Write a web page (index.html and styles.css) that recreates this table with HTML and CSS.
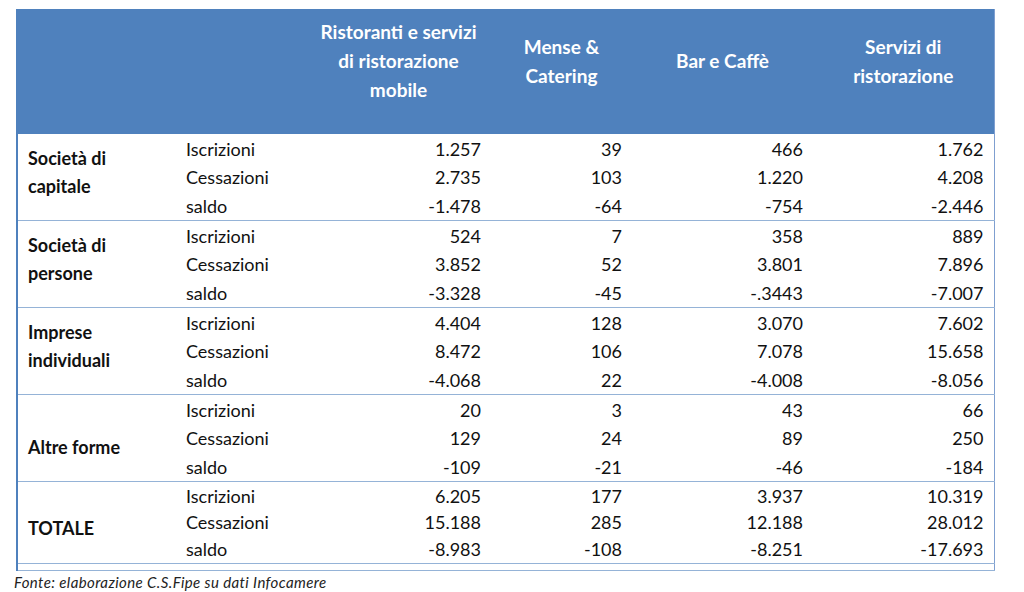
FILE: index.html
```html
<!DOCTYPE html>
<html lang="it">
<head>
<meta charset="utf-8">
<title>Iscrizioni e cessazioni</title>
<link rel="stylesheet" href="styles.css">
</head>
<body>
<div class="wrap">
<table class="data">
  <colgroup>
    <col class="c1"><col class="c2"><col class="c3"><col class="c4"><col class="c5"><col class="c6">
  </colgroup>
  <thead>
    <tr>
      <th></th>
      <th></th>
      <th>Ristoranti e servizi<br>di ristorazione<br>mobile</th>
      <th>Mense &amp;<br>Catering</th>
      <th>Bar e Caffè</th>
      <th>Servizi di<br>ristorazione</th>
    </tr>
  </thead>
  <tbody class="grp">
    <tr class="r1"><td class="lab two" rowspan="3">Società di<br>capitale</td><td>Iscrizioni</td><td class="n">1.257</td><td class="n">39</td><td class="n">466</td><td class="n">1.762</td></tr>
    <tr class="r2"><td>Cessazioni</td><td class="n">2.735</td><td class="n">103</td><td class="n">1.220</td><td class="n">4.208</td></tr>
    <tr class="r3"><td>saldo</td><td class="n">-1.478</td><td class="n">-64</td><td class="n">-754</td><td class="n">-2.446</td></tr>
  </tbody>
  <tbody class="grp">
    <tr class="r1"><td class="lab two" rowspan="3">Società di<br>persone</td><td>Iscrizioni</td><td class="n">524</td><td class="n">7</td><td class="n">358</td><td class="n">889</td></tr>
    <tr class="r2"><td>Cessazioni</td><td class="n">3.852</td><td class="n">52</td><td class="n">3.801</td><td class="n">7.896</td></tr>
    <tr class="r3"><td>saldo</td><td class="n">-3.328</td><td class="n">-45</td><td class="n">-.3443</td><td class="n">-7.007</td></tr>
  </tbody>
  <tbody class="grp">
    <tr class="r1"><td class="lab two" rowspan="3">Imprese<br>individuali</td><td>Iscrizioni</td><td class="n">4.404</td><td class="n">128</td><td class="n">3.070</td><td class="n">7.602</td></tr>
    <tr class="r2"><td>Cessazioni</td><td class="n">8.472</td><td class="n">106</td><td class="n">7.078</td><td class="n">15.658</td></tr>
    <tr class="r3"><td>saldo</td><td class="n">-4.068</td><td class="n">22</td><td class="n">-4.008</td><td class="n">-8.056</td></tr>
  </tbody>
  <tbody class="grp">
    <tr class="r1"><td class="lab one" rowspan="3">Altre forme</td><td>Iscrizioni</td><td class="n">20</td><td class="n">3</td><td class="n">43</td><td class="n">66</td></tr>
    <tr class="r2"><td>Cessazioni</td><td class="n">129</td><td class="n">24</td><td class="n">89</td><td class="n">250</td></tr>
    <tr class="r3"><td>saldo</td><td class="n">-109</td><td class="n">-21</td><td class="n">-46</td><td class="n">-184</td></tr>
  </tbody>
  <tbody class="grp last">
    <tr class="r1"><td class="lab one tot" rowspan="3">TOTALE</td><td>Iscrizioni</td><td class="n">6.205</td><td class="n">177</td><td class="n">3.937</td><td class="n">10.319</td></tr>
    <tr class="r2"><td>Cessazioni</td><td class="n">15.188</td><td class="n">285</td><td class="n">12.188</td><td class="n">28.012</td></tr>
    <tr class="r3"><td>saldo</td><td class="n">-8.983</td><td class="n">-108</td><td class="n">-8.251</td><td class="n">-17.693</td></tr>
  </tbody>
  <tfoot>
    <tr class="spacer"><td colspan="6"></td></tr>
  </tfoot>
</table>
<p class="source">Fonte: elaborazione C.S.Fipe su dati Infocamere</p>
</div>
</body>
</html>
```
FILE: styles.css
```css
html, body {
  margin: 0;
  padding: 0;
  background: #ffffff;
}

body {
  font-family: Lato, "Open Sans", "Liberation Sans", sans-serif;
  color: #111111;
}

.wrap {
  padding: 9px 0 0 16px;
}

.data {
  border-collapse: collapse;
  table-layout: fixed;
  width: 977px;
  font-size: 18px;
  border-left: 2px solid #4f81bd;
  border-right: 1px solid #7f9fd0;
}

.c1 { width: 159px; }
.c2 { width: 130px; }
.c3 { width: 185px; }
.c4 { width: 141px; }
.c5 { width: 181px; }
.c6 { width: 181px; }

.data thead th {
  background: #4f81bd;
  color: #ffffff;
  font-weight: 700;
  font-size: 19px;
  line-height: 29px;
  height: 125px;
  padding: 0 0 22px 0;
  box-sizing: border-box;
  text-align: center;
  vertical-align: middle;
}

.data td {
  padding: 0 10px;
  line-height: 20px;
  vertical-align: middle;
  white-space: nowrap;
}

.data td.n {
  text-align: right;
}

.grp {
  border-bottom: 1px solid #95b3d7;
}

.grp .r1 td { height: 29px; }
.grp .r2 td { height: 28px; }
.grp .r3 td { height: 29px; }

.grp.last .r1 td { height: 27px; }
.grp.last .r2 td { height: 26px; }
.grp.last .r3 td { height: 28px; }

.data td.lab {
  font-weight: 700;
  line-height: 28px;
  padding-left: 10px;
  white-space: normal;
}

.data td.lab.two {
  padding-bottom: 10px;
}

.data td.lab.one {
  padding-top: 18px;
}

.data td.lab.tot {
  padding-top: 10px;
}

.spacer td {
  height: 6px;
  padding: 0;
  border-bottom: 1px solid #95b3d7;
}

.source {
  margin: 2px 0 0 -2px;
  font-style: italic;
  font-size: 15px;
  line-height: 18px;
  letter-spacing: 0.4px;
  color: #222222;
}
```
